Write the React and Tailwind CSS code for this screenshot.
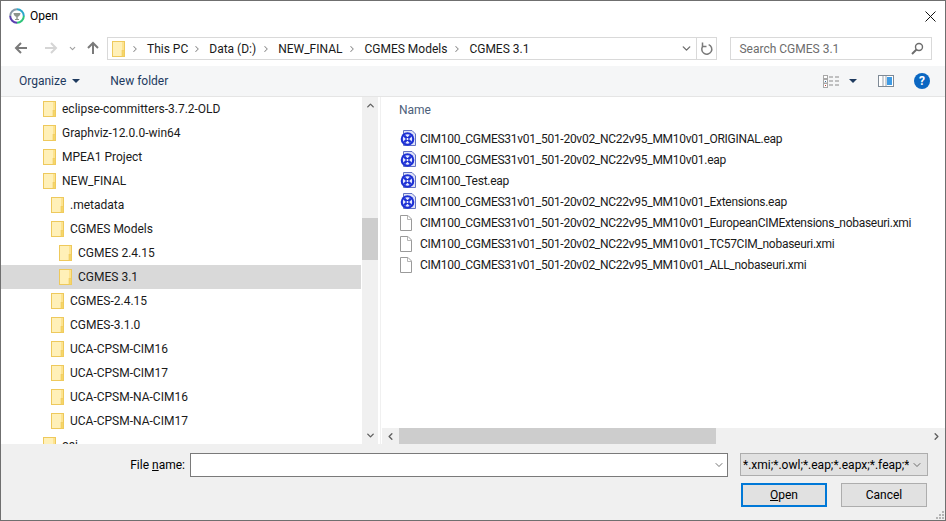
import React from 'react';
import { ChevronDown, ChevronUp, ChevronLeft, ChevronRight } from 'lucide-react';

const treeRows = [
    { name: 'eclipse-committers-3.7.2-OLD', level: 0 },
    { name: 'Graphviz-12.0.0-win64', level: 0 },
    { name: 'MPEA1 Project', level: 0 },
    { name: 'NEW_FINAL', level: 0 },
    { name: '.metadata', level: 1 },
    { name: 'CGMES Models', level: 1 },
    { name: 'CGMES 2.4.15', level: 2 },
    { name: 'CGMES 3.1', level: 2, selected: true },
    { name: 'CGMES-2.4.15', level: 1 },
    { name: 'CGMES-3.1.0', level: 1 },
    { name: 'UCA-CPSM-CIM16', level: 1 },
    { name: 'UCA-CPSM-CIM17', level: 1 },
    { name: 'UCA-CPSM-NA-CIM16', level: 1 },
    { name: 'UCA-CPSM-NA-CIM17', level: 1 },
    { name: 'osi', level: 0 },
];

const files = [
    { name: 'CIM100_CGMES31v01_501-20v02_NC22v95_MM10v01_ORIGINAL.eap', eap: true },
    { name: 'CIM100_CGMES31v01_501-20v02_NC22v95_MM10v01.eap', eap: true },
    { name: 'CIM100_Test.eap', eap: true },
    { name: 'CIM100_CGMES31v01_501-20v02_NC22v95_MM10v01_Extensions.eap', eap: true },
    { name: 'CIM100_CGMES31v01_501-20v02_NC22v95_MM10v01_EuropeanCIMExtensions_nobaseuri.xmi' },
    { name: 'CIM100_CGMES31v01_501-20v02_NC22v95_MM10v01_TC57CIM_nobaseuri.xmi' },
    { name: 'CIM100_CGMES31v01_501-20v02_NC22v95_MM10v01_ALL_nobaseuri.xmi' },
];

const crumbs = ['This PC', 'Data (D:)', 'NEW_FINAL', 'CGMES Models', 'CGMES 3.1'];

const indents = ['pl-[42px]', 'pl-[50px]', 'pl-[58px]'];

const FolderIcon = () => (
    <svg width="13" height="16" viewBox="0 0 13 16" className="shrink-0">
        <rect x="0.5" y="0.5" width="12" height="15" fill="#fde38f" stroke="#eec95c" />
        <rect x="1" y="1" width="9" height="14" fill="#fff0b8" />
        <rect x="10" y="9.5" width="2.5" height="6" fill="#f6d669" stroke="#eec95c" strokeWidth="0.6" />
    </svg>
);

const EapIcon = () => (
    <svg width="16" height="17" viewBox="0 0 16 17" className="shrink-0">
        <path d="M3.5 0.5H12L15.5 4V15.5H3.5Z" fill="#dfe3f7" stroke="#6272c4" />
        <circle cx="7.500" cy="9" r="6.800" fill="#1c30d4" />
        <circle cx="7.500" cy="9" r="4.700" fill="#e3e8ff" />
        <path d="M4.200 5.700L10.800 12.300M10.800 5.700L4.200 12.300" stroke="#1c30d4" strokeWidth="2.400" />
        <circle cx="7.500" cy="9" r="1" fill="#fff" />
    </svg>
);

const DocIcon = () => (
    <svg width="12" height="16" viewBox="0 0 12 16" className="shrink-0">
        <path d="M0.5 0.5H8L11.5 4V15.5H0.5Z" fill="#fff" stroke="#9a9a9a" />
        <path d="M7.5 0.5V4.5H11.5" fill="none" stroke="#b5b5b5" />
    </svg>
);

const NavArrow = ({ color, flip }) => (
    <svg width="14" height="14" viewBox="0 0 14 14" className={flip ? 'rotate-180' : ''}>
        <path d="M13 7H2M7 2L2 7L7 12" fill="none" stroke={color} strokeWidth="2" />
    </svg>
);

const AppLogo = () => (
    <svg width="16" height="16" viewBox="0 0 16 16">
        <path d="M8 1.2A6.8 6.8 0 0 1 14.8 8" fill="none" stroke="#2aa7c9" strokeWidth="2" />
        <path d="M14.8 8A6.8 6.8 0 0 1 8 14.8" fill="none" stroke="#2fc47a" strokeWidth="2" />
        <path d="M8 14.8A6.8 6.8 0 0 1 1.2 8" fill="none" stroke="#5a3fb0" strokeWidth="2" />
        <path d="M1.2 8A6.8 6.8 0 0 1 8 1.2" fill="none" stroke="#8a9aa8" strokeWidth="2" />
        <path d="M4.5 5H11.5C11.5 7.5 9.5 8.5 8.7 8.8V11H10V12H6V11H7.3V8.8C6.5 8.5 4.5 7.5 4.5 5Z" fill="#8d958c" />
    </svg>
);

const ViewIcon = () => (
    <svg width="17" height="13" viewBox="0 0 17 13">
        <rect x="0.5" y="0.5" width="4" height="3" fill="#fff" stroke="#a8a8a8" />
        <rect x="0.5" y="4.5" width="4" height="3.5" fill="#fff" stroke="#a8a8a8" />
        <rect x="0.5" y="8.5" width="4" height="4" fill="#fff" stroke="#a8a8a8" />
        <rect x="2" y="6" width="1" height="1" fill="#3a6ea5" />
        <rect x="2" y="10" width="1" height="1" fill="#c0392b" />
        <path d="M6 2H10M12 2H16M6 6H10M12 6H16M6 10H10M12 10H16" stroke="#8a8a8a" />
    </svg>
);

const PaneIcon = () => (
    <svg width="16" height="12" viewBox="0 0 16 12">
        <rect x="0.5" y="0.5" width="15" height="11" fill="#fff" stroke="#7f8a96" />
        <rect x="9" y="2" width="5" height="8" fill="#3f9be4" />
        <path d="M5 1V11M8 1V11" stroke="#9aa3ad" />
    </svg>
);

const SearchIcon = () => (
    <svg width="13" height="13" viewBox="0 0 13 13">
        <circle cx="8" cy="5" r="3.5" fill="none" stroke="#6d6d6d" strokeWidth="1.4" />
        <path d="M5.5 7.5L1 12" stroke="#6d6d6d" strokeWidth="2" />
    </svg>
);

const RefreshIcon = () => (
    <svg width="14" height="14" viewBox="0 0 14 14">
        <path d="M4 3.2A5 5 0 1 0 10 3.2" fill="none" stroke="#7a7a7a" strokeWidth="1.5" transform="rotate(-15 7 8)" />
        <path d="M2.5 0.5V4.5H6.5" fill="none" stroke="#7a7a7a" strokeWidth="1.5" />
    </svg>
);

const Grip = () => (
    <div className="grid grid-cols-3 gap-px">
        <span /><span /><span className="w-[2px] h-[2px] bg-[#b5b5b5]" />
        <span /><span className="w-[2px] h-[2px] bg-[#b5b5b5]" /><span className="w-[2px] h-[2px] bg-[#b5b5b5]" />
        <span className="w-[2px] h-[2px] bg-[#b5b5b5]" /><span className="w-[2px] h-[2px] bg-[#b5b5b5]" /><span className="w-[2px] h-[2px] bg-[#b5b5b5]" />
    </div>
);

const App = () => {
    return (
        <div className="w-[946px] h-[521px] overflow-hidden bg-white border border-[#6f6f6f] flex flex-col text-[12px] text-black font-['Roboto','Liberation_Sans',sans-serif]">
            {/* title bar */}
            <div className="h-[30px] shrink-0 flex items-center pl-[8px] pr-[8px]">
                <AppLogo />
                <span className="ml-[5px]">Open</span>
                <svg width="11" height="11" viewBox="0 0 11 11" className="ml-auto mr-[1px]">
                    <path d="M0.5 0.5L10.5 10.5M10.5 0.5L0.5 10.5" stroke="#111" />
                </svg>
            </div>

            {/* nav row */}
            <div className="h-[35px] shrink-0 flex items-start pt-[6px] pl-[13px] pr-[13px]">
                <div className="h-[22px] flex items-center">
                    <NavArrow color="#7a7a7a" />
                    <div className="w-[16px]" />
                    <NavArrow color="#d5d5d5" flip />
                    <ChevronDown size={9} strokeWidth={3} className="ml-[10px] text-[#a0a0a0]" />
                    <svg width="14" height="14" viewBox="0 0 14 14" className="ml-[9px]">
                        <path d="M7 13V2M2 7L7 2L12 7" fill="none" stroke="#7a7a7a" strokeWidth="2" />
                    </svg>
                </div>
                <div className="ml-[7px] w-[612px] h-[23px] border border-[#d9d9d9] flex items-center pl-[4px]">
                    <span className="mr-[1px] flex"><FolderIcon /></span>
                    {crumbs.map((c, i) => (
                        <div key={c} className="flex items-center">
                            <ChevronRight size={10} strokeWidth={2.5} className={`mr-[7px] text-[#8a8a8a] ${i > 1 ? 'ml-[5px]' : 'ml-[4px]'}`} />
                            <span className="text-[#1a1a1a] whitespace-nowrap">{c}</span>
                        </div>
                    ))}
                    <ChevronDown size={13} strokeWidth={2.5} className="ml-auto mr-[2px] text-[#6d6d6d]" />
                    <div className="w-[20px] h-full border-l border-[#d9d9d9] flex items-center justify-center ml-[1px]">
                        <RefreshIcon />
                    </div>
                </div>
                <div className="ml-[13px] w-[202px] h-[23px] border border-[#d9d9d9] flex items-center pl-[8px] pr-[7px] text-[#6d6d6d]">
                    <span>Search CGMES 3.1</span>
                    <span className="ml-auto flex"><SearchIcon /></span>
                </div>
            </div>

            {/* toolbar */}
            <div className="h-[31px] shrink-0 bg-[#f5f6f7] border-b border-[#e5e5e5] flex items-center pl-[18px] pr-[15px] text-[#1e3a5f]">
                <span>Organize</span>
                <svg width="8" height="4" viewBox="0 0 8 4" className="ml-[6px]"><path d="M0 0H8L4 4Z" fill="#1e3a5f" /></svg>
                <span className="ml-[30px]">New folder</span>
                <div className="ml-auto flex items-center">
                    <ViewIcon />
                    <svg width="8" height="4" viewBox="0 0 8 4" className="ml-[9px]"><path d="M0 0H8L4 4Z" fill="#1e3a5f" /></svg>
                    <div className="w-[21px]" />
                    <PaneIcon />
                    <div className="w-[20px]" />
                    <div className="w-[16px] h-[16px] rounded-full bg-[#0b67c2] text-white flex items-center justify-center font-bold text-[12px] leading-none">?</div>
                </div>
            </div>

            {/* main panes */}
            <div className="h-[347px] shrink-0 flex">
                <div className="w-[360px] shrink-0 overflow-hidden">
                    {treeRows.map(r => (
                        <div
                            key={r.name}
                            className={`h-[24px] flex items-center gap-[6px] whitespace-nowrap text-[#1a1a1a] ${indents[r.level]} ${r.selected ? 'bg-[#d9d9d9]' : ''}`}
                        >
                            <FolderIcon />
                            <span>{r.name}</span>
                        </div>
                    ))}
                </div>
                <div className="ml-px w-[16px] shrink-0 bg-[#f0f0f0] flex flex-col items-center">
                    <div className="h-[17px] flex items-center justify-center"><ChevronUp size={11} strokeWidth={3} className="text-[#606060]" /></div>
                    <div className="h-[104px]" />
                    <div className="w-full h-[42px] bg-[#cdcdcd]" />
                    <div className="flex-1" />
                    <div className="h-[17px] flex items-center justify-center"><ChevronDown size={11} strokeWidth={3} className="text-[#606060]" /></div>
                </div>
                <div className="w-[3px] shrink-0 bg-white border-r border-[#f0f0f0]" />
                <div className="flex-1 flex flex-col min-w-0">
                    <div className="flex-1 min-h-0 overflow-hidden pl-[18px]">
                        <div className="h-[25px] flex items-center text-[#4c607a]">Name</div>
                        <div className="h-[6px]" />
                        {files.map(f => (
                            <div key={f.name} className="h-[21px] flex items-center whitespace-nowrap text-[#1a1a1a]">
                                <span className="w-[21px] flex justify-start pl-px shrink-0">
                                    {f.eap ? <EapIcon /> : <DocIcon />}
                                </span>
                                <span className="tracking-[-0.27px]">{f.name}</span>
                            </div>
                        ))}
                    </div>
                    <div className="ml-px h-[16px] shrink-0 bg-[#f0f0f0] flex items-center">
                        <div className="w-[17px] flex justify-center"><ChevronLeft size={11} strokeWidth={3} className="text-[#606060]" /></div>
                        <div className="w-[317px] h-full bg-[#cdcdcd]" />
                        <div className="flex-1" />
                        <div className="w-[18px] flex justify-center"><ChevronRight size={11} strokeWidth={3} className="text-[#606060]" /></div>
                    </div>
                </div>
            </div>

            {/* bottom bar */}
            <div className="flex-1 bg-[#f0f0f0] relative pt-[9px] pl-[130px] pr-[17px]">
                <div className="flex items-start">
                    <span className="w-[54px] h-[24px] flex items-center justify-end whitespace-pre">File <span className="underline">n</span>ame:</span>
                    <div className="ml-[5px] w-[538px] h-[24px] bg-white border border-[#7a7a7a] flex items-center justify-end pr-[2px]">
                        <ChevronDown size={12} strokeWidth={1.5} className="text-[#444]" />
                    </div>
                    <div className="ml-[12px] w-[188px] h-[23px] bg-[#e1e1e1] border border-[#adadad] flex items-center pl-[2px] pr-[4px]">
                        <span className="whitespace-nowrap overflow-hidden flex-1">*.xmi;*.owl;*.eap;*.eapx;*.feap;*</span>
                        <ChevronDown size={12} strokeWidth={1.5} className="text-[#444] ml-[2px] shrink-0" />
                    </div>
                </div>
                <div className="flex justify-end mt-[6px] pr-px">
                    <button className="w-[86px] h-[24px] bg-[#e1e1e1] border-2 border-[#0078d7] flex items-center justify-center"><span><span className="underline">O</span>pen</span></button>
                    <button className="ml-[14px] w-[86px] h-[24px] bg-[#e1e1e1] border border-[#adadad] flex items-center justify-center">Cancel</button>
                </div>
                <div className="absolute right-[1px] bottom-[1px]"><Grip /></div>
            </div>
        </div>
    );
};

export default App;
